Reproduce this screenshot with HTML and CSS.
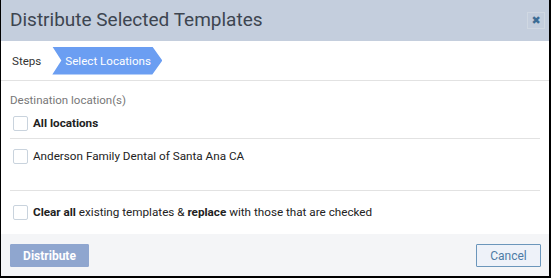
FILE: index.html
```html
<!DOCTYPE html>
<html>
  <head>
    <meta charset="utf-8">
    <title>Distribute Selected Templates</title>
    <link rel="stylesheet" href="styles.css">
  </head>
  <body>
    <div class="dialog">
      <div class="dialog-header">
        <span class="dialog-title">Distribute Selected Templates</span>
        <span class="close-btn">&#10006;</span>
      </div>
      <div class="steps">
        <span class="steps-label">Steps</span>
        <span class="step active">Select Locations</span>
      </div>
      <div class="dialog-body">
        <div class="field-label">Destination location(s)</div>
        <div class="row row-all">
          <span class="checkbox"></span>
          <b>All locations</b>
        </div>
        <div class="row row-loc">
          <span class="checkbox"></span>
          <span>Anderson Family Dental of Santa Ana CA</span>
        </div>
        <div class="row row-clear">
          <span class="checkbox"></span>
          <span><b>Clear all</b> existing templates &amp; <b>replace</b> with those that are checked</span>
        </div>
      </div>
      <div class="dialog-footer">
        <button class="btn btn-primary">Distribute</button>
        <button class="btn btn-cancel">Cancel</button>
      </div>
    </div>
  </body>
</html>
```
FILE: styles.css
```css
body{
  margin: 0;
  font-family: Roboto, "Liberation Sans", sans-serif;
  color: #333;
}
.dialog{
  width: 551px;
  height: 278px;
  box-sizing: border-box;
  border-left: 1px solid #000;
  border-right: 2px solid #000;
  border-bottom: 2px solid #000;
  background: #fff;
  display: flex;
  flex-direction: column;
}
.dialog-header{
  height: 41px;
  flex: none;
  background: #c4cedd;
  display: flex;
  align-items: center;
  justify-content: space-between;
  padding: 0 4px 0 9px;
}
.dialog-title{
  font-size: 19px;
  color: #3d4550;
  margin-top: -2px;
}
.close-btn{
  width: 16px;
  height: 15px;
  border: 1px solid #d0d8e2;
  color: #3c6d95;
  font-size: 11px;
  line-height: 15px;
  text-align: center;
  font-family: "DejaVu Sans", sans-serif;
  font-weight: bold;
}
.steps{
  height: 39px;
  flex: none;
  border-bottom: 1px solid #e2e2e2;
  display: flex;
  align-items: center;
  padding-left: 11px;
  font-size: 11.6px;
}
.steps-label{
  color: #333;
  margin-right: 11px;
}
.step{
  height: 28px;
  line-height: 28px;
  width: 97px;
  padding-left: 13px;
  color: #fff;
  background: #6b9ef2;
  clip-path: polygon(0 0, calc(100% - 10px) 0, 100% 50%, calc(100% - 10px) 100%, 0 100%, 9px 50%);
}
.dialog-body{
  flex: 1;
  padding: 0 9px;
  font-size: 11.7px;
}
.field-label{
  margin-top: 11px;
  line-height: 16px;
  font-size: 11.5px;
  color: #777;
}
.row{
  display: flex;
  align-items: center;
  color: #222;
}
.row-all{
  height: 30px;
  border-bottom: 1px solid #e2e2e2;
}
.row-loc{
  height: 34px;
  border-bottom: 1px solid #e2e2e2;
  padding-bottom: 17px;
}
.row-clear{
  height: 42px;
}
.checkbox{
  width: 13px;
  height: 13px;
  border: 1px solid #c9d3dd;
  border-radius: 2px;
  margin: 0 5px 0 3px;
  flex: none;
}
.dialog-footer{
  height: 42px;
  flex: none;
  background: #f4f5f7;
  display: flex;
  justify-content: space-between;
  align-items: flex-start;
  padding: 10px 8px 0 9px;
  box-sizing: border-box;
}
.btn{
  height: 23px;
  font-family: Roboto, "Liberation Sans", sans-serif;
  font-size: 12px;
  padding: 0;
  border-radius: 1px;
}
.btn-primary{
  width: 79px;
  background: #8fa6cf;
  border: 1px solid #8fa6cf;
  color: #fff;
  font-weight: bold;
}
.btn-cancel{
  width: 65px;
  background: #eef2f9;
  border: 1px solid #6b96bb;
  color: #4d7ba5;
}
```
